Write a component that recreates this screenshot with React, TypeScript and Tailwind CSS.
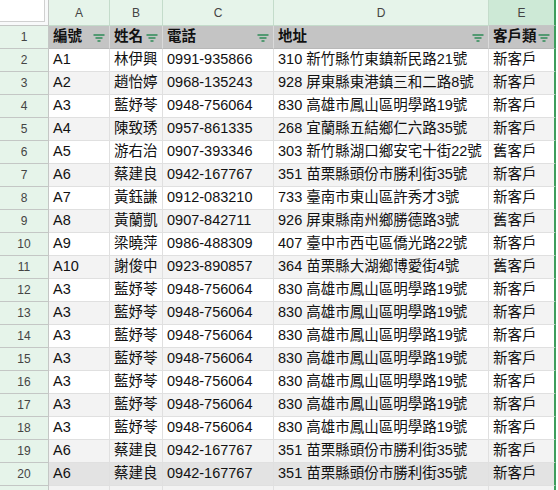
import React from 'react';

const rows: [string, string, string, string, string][] = [
  ['A1', '林伊興', '0991-935866', '310 新竹縣竹東鎮新民路21號', '新客戶'],
  ['A2', '趙怡婷', '0968-135243', '928 屏東縣東港鎮三和二路8號', '新客戶'],
  ['A3', '藍妤苓', '0948-756064', '830 高雄市鳳山區明學路19號', '新客戶'],
  ['A4', '陳致琇', '0957-861335', '268 宜蘭縣五結鄉仁六路35號', '新客戶'],
  ['A5', '游右治', '0907-393346', '303 新竹縣湖口鄉安宅十街22號', '舊客戶'],
  ['A6', '蔡建良', '0942-167767', '351 苗栗縣頭份市勝利街35號', '新客戶'],
  ['A7', '黃鈺謙', '0912-083210', '733 臺南市東山區許秀才3號', '新客戶'],
  ['A8', '黃蘭凱', '0907-842711', '926 屏東縣南州鄉勝德路3號', '舊客戶'],
  ['A9', '梁曉萍', '0986-488309', '407 臺中市西屯區僑光路22號', '新客戶'],
  ['A10', '謝俊中', '0923-890857', '364 苗栗縣大湖鄉博愛街4號', '舊客戶'],
  ['A3', '藍妤苓', '0948-756064', '830 高雄市鳳山區明學路19號', '新客戶'],
  ['A3', '藍妤苓', '0948-756064', '830 高雄市鳳山區明學路19號', '新客戶'],
  ['A3', '藍妤苓', '0948-756064', '830 高雄市鳳山區明學路19號', '新客戶'],
  ['A3', '藍妤苓', '0948-756064', '830 高雄市鳳山區明學路19號', '新客戶'],
  ['A3', '藍妤苓', '0948-756064', '830 高雄市鳳山區明學路19號', '新客戶'],
  ['A3', '藍妤苓', '0948-756064', '830 高雄市鳳山區明學路19號', '新客戶'],
  ['A3', '藍妤苓', '0948-756064', '830 高雄市鳳山區明學路19號', '新客戶'],
  ['A6', '蔡建良', '0942-167767', '351 苗栗縣頭份市勝利街35號', '新客戶'],
  ['A6', '蔡建良', '0942-167767', '351 苗栗縣頭份市勝利街35號', '新客戶'],
];

const headers = ['編號', '姓名', '電話', '地址', '客戶類'];
const letters = ['A', 'B', 'C', 'D', 'E'];

const gridCols = 'grid grid-cols-[49px_61px_53px_111px_215px_67px]';
const font = { fontFamily: '"Liberation Sans", "Noto Sans CJK TC", Arial, sans-serif' };

function FilterIcon() {
  return (
    <svg width="12" height="8" viewBox="0 0 12 8" className="shrink-0">
      <path d="M0.5 1h11M2.5 4h7M4.5 7h3" stroke="#2e8b57" strokeWidth="1.3" />
    </svg>
  );
}

export default function App() {
  return (
    <div className="w-[558px] h-[490px] overflow-hidden bg-white text-[#111]" style={font}>
      {/* column letters */}
      <div className={`${gridCols} h-[26px]`}>
        <div className="bg-[#f8f9fa] border-r border-b border-[#c4c7c5]">
          <div className="w-[45px] h-[22px] bg-white border-r border-b border-[#d0d0d0]" />
        </div>
        {letters.map((l) => (
          <div
            key={l}
            className={`flex items-center justify-center text-[12px] text-[#444] border-b border-r ${
              l === 'E'
                ? 'bg-[#cde9d6] border-r-2 border-r-[#3e9d5c] border-b-[#c4c7c5]'
                : 'bg-[#e6f4ea] border-[#c4dccb]'
            }`}
          >
            {l}
          </div>
        ))}
      </div>

      {/* header row */}
      <div className={`${gridCols} h-[23px]`}>
        <div className="flex items-center justify-center text-[12px] text-[#444] bg-[#e6f4ea] border-r border-b border-[#c4c7c5]">
          1
        </div>
        {headers.map((h, i) => (
          <div
            key={h}
            className={`relative flex items-center px-1 bg-[#c4c4c4] border-b border-[#b8b8b8] overflow-hidden ${
              i === 4 ? 'border-r-2 border-r-[#3e9d5c]' : 'border-r border-r-[#dadada]'
            }`}
          >
            <span className="text-[14.5px] font-bold whitespace-nowrap">{h}</span>
            <span className="absolute right-[4px] top-[8px]">
              <FilterIcon />
            </span>
          </div>
        ))}
      </div>

      {/* data rows */}
      {[...rows, ['', '', '', '', ''] as [string, string, string, string, string]].map((r, idx) => {
        const n = idx + 2;
        const bg = n === 20 ? 'bg-[#e3e3e3]' : n % 2 === 1 ? 'bg-[#f3f3f3]' : 'bg-white';
        return (
          <div key={idx} className={`${gridCols} h-[23px]`}>
            <div className="flex items-center justify-center text-[12px] text-[#444] bg-[#e6f4ea] border-r border-b border-[#c4c7c5]">
              {n <= 20 ? n : ''}
            </div>
            {r.map((c, i) => (
              <div
                key={i}
                className={`flex items-center px-1 border-b border-[#e0e0e0] whitespace-nowrap overflow-hidden text-[14.5px] ${bg} ${
                  i === 4 ? 'border-r-2 border-r-[#3e9d5c]' : 'border-r border-r-[#e0e0e0]'
                }`}
              >
                {c}
              </div>
            ))}
          </div>
        );
      })}
    </div>
  );
}
